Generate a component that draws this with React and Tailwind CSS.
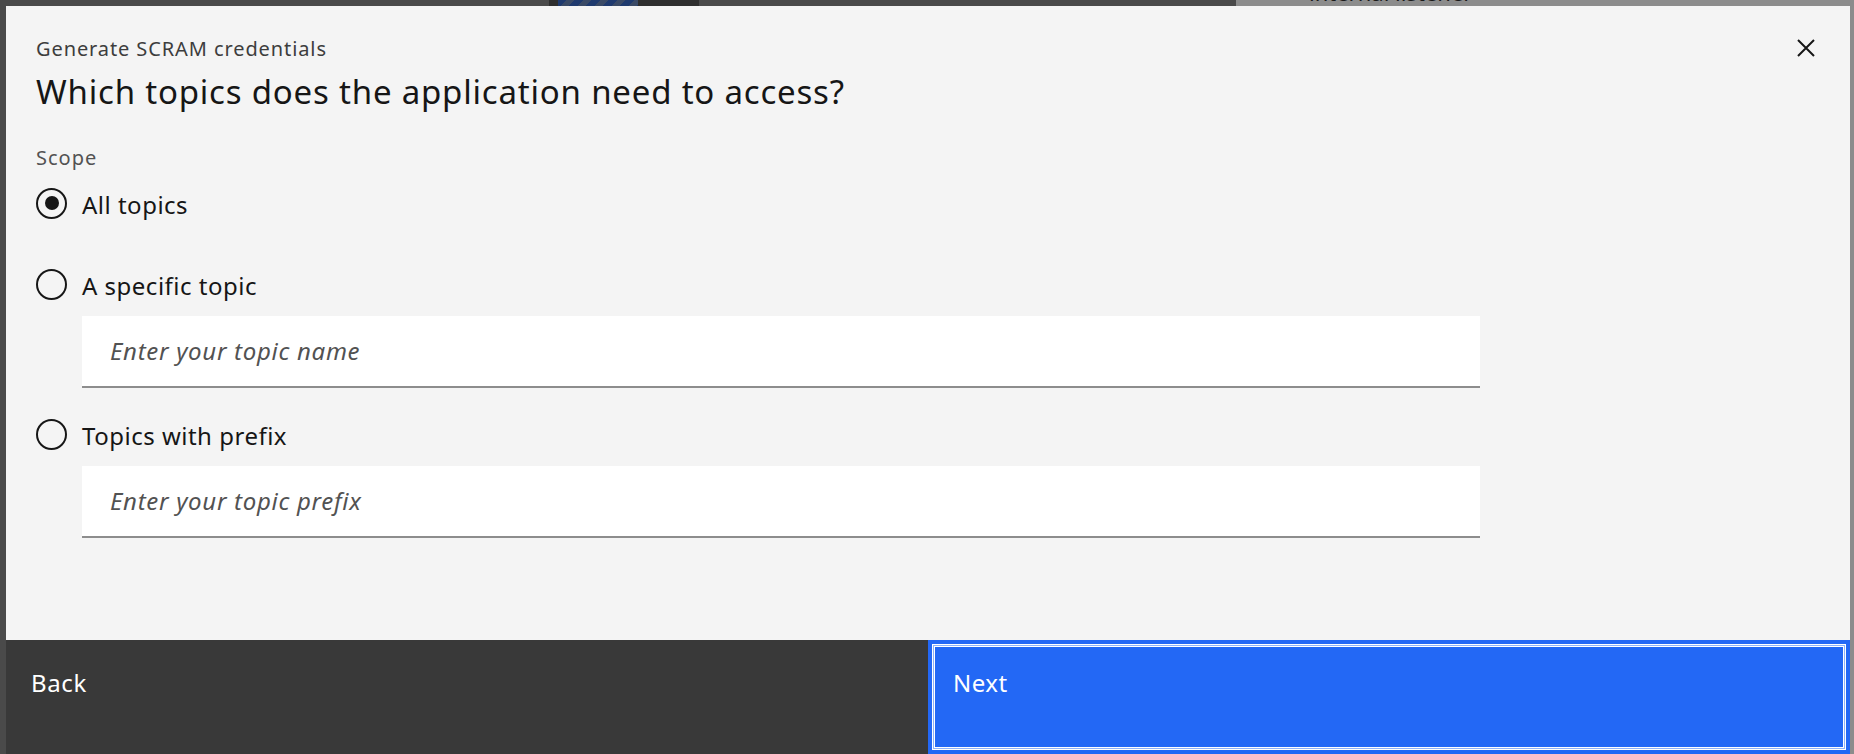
import React from "react";

function Radio({ checked, label }) {
  return (
    <div className="flex items-center h-[40px]">
      <div className="w-[31px] h-[31px] rounded-full border-2 border-[#161616] flex items-center justify-center shrink-0">
        {checked && <div className="w-[14px] h-[14px] rounded-full bg-[#161616]" />}
      </div>
      <span className="ml-[15px] mt-[3px] text-[24px] tracking-[0.5px] leading-[32px] text-[#161616]">{label}</span>
    </div>
  );
}

function TextInput({ placeholder }) {
  return (
    <div className="ml-[46px] w-[1398px] h-[72px] bg-white border-b-2 border-[#8d8d8d] flex items-center pl-[28px]">
      <span className="italic text-[24px] tracking-[0.7px] text-[#525252]">{placeholder}</span>
    </div>
  );
}

export default function App() {
  return (
    <div className="relative w-[1854px] h-[754px] overflow-hidden bg-[#4a4a4a] font-['Noto_Sans',sans-serif]">
      {/* dimmed background page */}
      <div className="absolute left-[1236px] top-0 right-0 bottom-0 bg-[#8c8c8c]" />
      <div className="absolute left-[549px] top-0 w-[150px] h-[6px] bg-[#2e2e2e]" />
      <div className="absolute left-[558px] top-0 w-[80px] h-[6px] bg-[repeating-linear-gradient(135deg,#1f3a6e_0px,#1f3a6e_6px,#3a4a66_6px,#3a4a66_12px)]" />
      <div className="absolute left-[1309px] top-[-24px] text-[22px] text-[#1a1a1a] whitespace-nowrap">internal listener</div>

      {/* modal */}
      <div className="absolute left-[6px] top-[6px] w-[1844px] h-[748px] bg-[#f4f4f4] flex flex-col">
        <button className="absolute right-[35px] top-[33px] w-[18px] h-[18px]">
          <svg width="18" height="18" viewBox="0 0 18 18" fill="none">
            <path d="M1 1L17 17M17 1L1 17" stroke="#161616" strokeWidth="2" />
          </svg>
        </button>

        <div className="pl-[30px] pt-[29px] flex flex-col">
          <div className="h-[28px] leading-[28px] text-[20px] tracking-[0.9px] text-[#3d3d3d]">Generate SCRAM credentials</div>
          <div className="mt-[9px] h-[40px] leading-[40px] text-[33px] tracking-[0.8px] text-[#161616]">
            Which topics does the application need to access?
          </div>
          <div className="mt-[34px] h-[24px] leading-[24px] text-[20px] tracking-[1px] text-[#525252]">Scope</div>
          <div className="mt-[13px]">
            <Radio checked label="All topics" />
          </div>
          <div className="mt-[41px]">
            <Radio label="A specific topic" />
          </div>
          <div className="mt-[12px]">
            <TextInput placeholder="Enter your topic name" />
          </div>
          <div className="mt-[26px]">
            <Radio label="Topics with prefix" />
          </div>
          <div className="mt-[12px]">
            <TextInput placeholder="Enter your topic prefix" />
          </div>
        </div>

        <div className="mt-auto flex h-[114px]">
          <button className="w-[922px] h-full bg-[#393939] text-white text-left pl-[25px] pt-[27px] flex items-start">
            <span className="text-[24px] tracking-[0.6px] leading-[32px]">Back</span>
          </button>
          <button className="w-[922px] h-full bg-[#2368f5] text-white text-left pl-[25px] pt-[27px] flex items-start shadow-[inset_0_0_0_4px_#2368f5,inset_0_0_0_5px_#ffffff,inset_0_0_0_6px_#8fb2fa,inset_0_0_0_7px_#ffffff]">
            <span className="text-[24px] tracking-[0.5px] leading-[32px]">Next</span>
          </button>
        </div>
      </div>
    </div>
  );
}
